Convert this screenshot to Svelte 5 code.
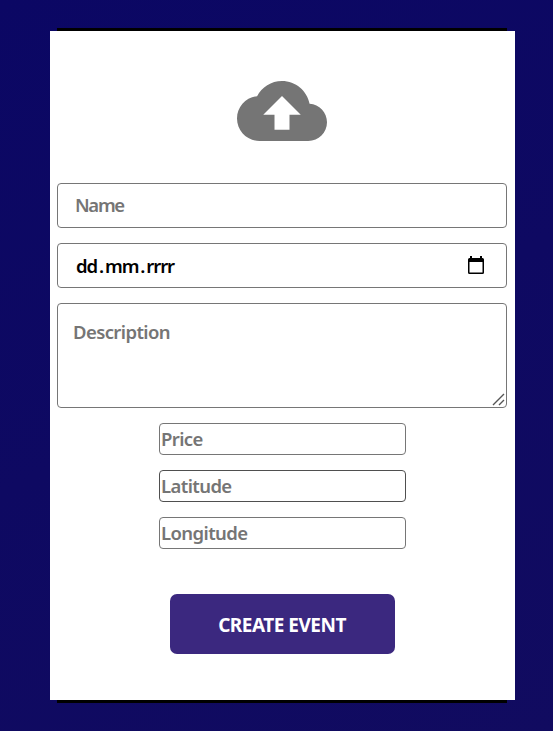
<script>
  const details = ['Price', 'Latitude', 'Longitude'];
</script>

<main>
  <div class="frame">
    <form class="card">
      <svg class="upload" viewBox="0 0 24 24" aria-hidden="true">
        <path d="M19.35 10.04C18.67 6.59 15.64 4 12 4 9.11 4 6.6 5.64 5.35 8.04 2.34 8.36 0 10.91 0 14c0 3.31 2.69 6 6 6h13c2.76 0 5-2.24 5-5 0-2.64-2.05-4.78-4.65-4.96zM14 13v4h-4v-4H7l5-5 5 5h-3z" />
      </svg>
      <input class="wide name" type="text" placeholder="Name" />
      <div class="wide date">
        <span class="parts"><span>dd</span><span class="dot">.</span><span>mm</span><span class="dot">.</span><span>rrrr</span></span>
        <svg width="18" height="20" viewBox="0 0 18 20" aria-hidden="true">
          <path fill-rule="evenodd" d="M3 1h2v2h8V1h2v2h.5Q17 3 17 4.5v13Q17 19 15.5 19h-13Q1 19 1 17.500v-13Q1 3 2.500 3H3zM2.500 7v10.500h13V7z" />
        </svg>
      </div>
      <div class="wide area">
        <textarea placeholder="Description"></textarea>
        <svg class="grip" width="13" height="13" viewBox="0 0 13 13" aria-hidden="true">
          <path d="M1 12 12 1M7 12l5-5" />
        </svg>
      </div>
      {#each details as label}
        <input class={['small', label.toLowerCase()]} type="text" placeholder={label} />
      {/each}
      <button type="button"><span>CREATE EVENT</span></button>
    </form>
  </div>
</main>

<style>
  :global(body) {
    margin: 0;
    overflow: hidden;
  }
  main {
    box-sizing: border-box;
    width: 553px;
    height: 731px;
    padding: 28px 0 0 57px;
    background: linear-gradient(155deg, #0b0764, #110b60);
    font: 700 18.5px 'Noto Sans', 'Open Sans', sans-serif;
  }
  .frame {
    box-sizing: border-box;
    width: 450px;
    height: 675px;
    padding: 3px 0;
    background: #000;
  }
  .card {
    box-sizing: border-box;
    display: flex;
    flex-direction: column;
    align-items: center;
    gap: 15px;
    width: 465px;
    height: 669px;
    margin-left: -7px;
    padding-top: 35px;
    background: #fff;
  }
  .upload {
    width: 90px;
    height: 90px;
    margin: 0 1px 12px 0;
    fill: #757575;
    flex: none;
  }
  input, .date, .area {
    box-sizing: border-box;
    flex: none;
    margin: 0;
    border: 1px solid #767676;
    border-radius: 4px;
    background: #fff;
    font: inherit;
    font-weight: 650;
    outline: none;
  }
  input, textarea {
    letter-spacing: -0.6px;
  }
  .wide {
    width: 450px;
    height: 45px;
    margin-right: 1px;
  }
  .name {
    padding: 0 17px 2px;
    letter-spacing: -1.3px;
  }
  ::placeholder {
    color: #757575;
    opacity: 1;
  }
  .date {
    display: flex;
    align-items: center;
    justify-content: space-between;
    padding: 0 21px 0 18px;
    color: #000;
    letter-spacing: -1.1px;
  }
  .date svg {
    margin-bottom: 2px;
  }
  .dot {
    display: inline-block;
    width: 8px;
    text-align: center;
  }
  .area {
    display: flex;
    position: relative;
    height: 105px;
  }
  textarea {
    box-sizing: border-box;
    width: 100%;
    height: 100%;
    padding: 15px;
    border: 0;
    background: transparent;
    font: inherit;
    resize: none;
    outline: none;
  }
  .grip {
    position: absolute;
    right: 1px;
    bottom: 1px;
    fill: none;
    stroke: #555;
    stroke-width: 1.4;
  }
  .small {
    width: 247px;
    height: 32px;
    padding: 0 1px 2px;
  }
  .latitude {
    border-color: #4f4f4f;
  }
  button {
    width: 225px;
    height: 60px;
    margin: 30px 0 0;
    padding: 2px 1px 0 0;
    border: 0;
    border-radius: 7px;
    background: #3b287f;
    color: #fff;
    font: inherit;
    font-size: 19px;
    letter-spacing: -0.5px;
  }
</style>
